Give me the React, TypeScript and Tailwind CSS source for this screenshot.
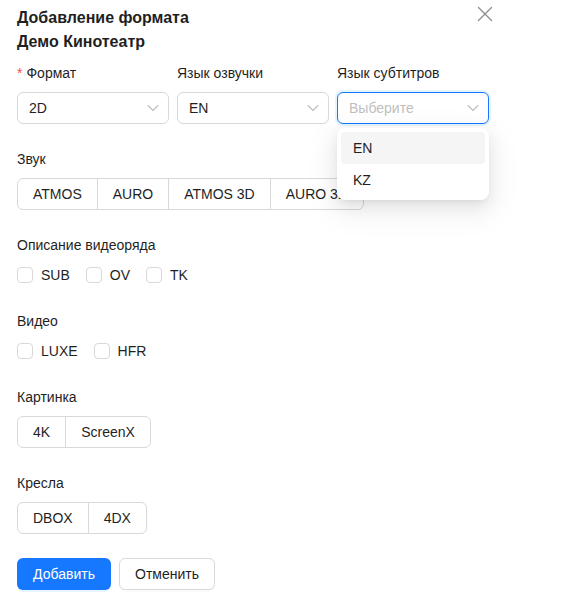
import { ChevronDown, X } from 'lucide-react'

const font = { fontFamily: '"Liberation Sans", Arial, sans-serif' }

function Select({ value, placeholder, focused }: { value?: string; placeholder?: string; focused?: boolean }) {
  return (
    <div
      className={`flex h-8 w-[152px] items-center justify-between rounded-md border bg-white pl-[11px] pr-[5px] text-sm ${
        focused ? 'border-[#1677ff] shadow-[0_0_0_2px_rgba(5,145,255,0.1)]' : 'border-[#d9d9d9]'
      }`}
    >
      {value ? (
        <span className="text-[#1f1f1f]">{value}</span>
      ) : (
        <span className="text-[#bfbfbf]">{placeholder}</span>
      )}
      <ChevronDown className="h-5 w-5 text-[#bfbfbf]" strokeWidth={1.3} />
    </div>
  )
}

function Segmented({ items }: { items: string[] }) {
  return (
    <div className="flex">
      {items.map((item, i) => (
        <div
          key={item}
          className={`flex h-8 items-center border border-[#d9d9d9] bg-white px-[15px] text-sm text-[#1f1f1f] ${
            i === 0 ? 'rounded-l-md' : '-ml-px'
          } ${i === items.length - 1 ? 'rounded-r-md' : ''}`}
        >
          {item}
        </div>
      ))}
    </div>
  )
}

function Checks({ items }: { items: string[] }) {
  return (
    <div className="flex h-[22px] items-center">
      {items.map((item) => (
        <label key={item} className="mr-2 flex items-center text-sm text-[#1f1f1f]">
          <span className="h-4 w-4 rounded border border-[#d9d9d9] bg-white" />
          <span className="px-2">{item}</span>
        </label>
      ))}
    </div>
  )
}

function Field({ label, children }: { label: string; children: React.ReactNode }) {
  return (
    <div className="mb-6">
      <div className="mb-2 h-[22px] text-sm leading-[22px] text-[#1f1f1f]">{label}</div>
      {children}
    </div>
  )
}

export default function App() {
  return (
    <div className="relative min-h-[593px] w-[572px] bg-white pl-[17px] pt-[6px]" style={font}>
      {/* Header */}
      <button className="absolute left-[472px] top-px flex h-[26px] w-[26px] items-center justify-center text-[#8c8c8c]">
        <X className="h-[26px] w-[26px]" strokeWidth={1.2} />
      </button>
      <div className="mb-2 text-base font-bold leading-6 text-[#1f1f1f]">
        <div>Добавление формата</div>
        <div>Демо Кинотеатр</div>
      </div>

      {/* Selects */}
      <div className="mb-6 flex gap-2">
        <div>
          <div className="mb-2 h-[22px] text-sm leading-[22px] text-[#1f1f1f]">
            <span className="mr-1 text-[#ff4d4f]">*</span>Формат
          </div>
          <Select value="2D" />
        </div>
        <div>
          <div className="mb-2 h-[22px] text-sm leading-[22px] text-[#1f1f1f]">Язык озвучки</div>
          <Select value="EN" />
        </div>
        <div className="relative">
          <div className="mb-2 h-[22px] text-sm leading-[22px] text-[#1f1f1f]">Язык субтитров</div>
          <Select placeholder="Выберите" focused />
          <div className="absolute left-0 top-[66px] z-10 w-[152px] rounded-lg bg-white p-1 shadow-[0_6px_16px_0_rgba(0,0,0,0.08),0_3px_6px_-4px_rgba(0,0,0,0.12),0_9px_28px_8px_rgba(0,0,0,0.05)]">
            <div className="flex h-8 items-center rounded bg-[#f5f5f5] px-3 text-sm text-[#1f1f1f]">EN</div>
            <div className="flex h-8 items-center rounded px-3 text-sm text-[#1f1f1f]">KZ</div>
          </div>
        </div>
      </div>

      <Field label="Звук">
        <Segmented items={['ATMOS', 'AURO', 'ATMOS 3D', 'AURO 3D']} />
      </Field>

      <Field label="Описание видеоряда">
        <Checks items={['SUB', 'OV', 'TK']} />
      </Field>

      <Field label="Видео">
        <Checks items={['LUXE', 'HFR']} />
      </Field>

      <Field label="Картинка">
        <Segmented items={['4K', 'ScreenX']} />
      </Field>

      <Field label="Кресла">
        <Segmented items={['DBOX', '4DX']} />
      </Field>

      {/* Actions */}
      <div className="flex gap-2">
        <button className="h-8 w-[94px] rounded-md bg-[#1677ff] text-sm text-white shadow-[0_2px_0_rgba(5,145,255,0.1)]">
          Добавить
        </button>
        <button className="h-8 w-[96px] rounded-md border border-[#d9d9d9] bg-white text-sm text-[#1f1f1f] shadow-[0_2px_0_rgba(0,0,0,0.02)]">
          Отменить
        </button>
      </div>
    </div>
  )
}
